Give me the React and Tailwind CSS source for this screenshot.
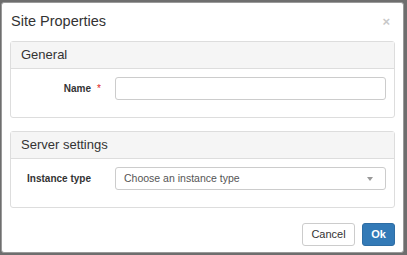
import React from 'react';

const Panel = ({ title, children }) => (
    <div className="border border-[#dddddd] rounded-[3px] bg-white">
        <div className="h-[27px] flex items-center px-[10px] bg-[#f5f5f5] border-b border-[#dddddd] text-[13px] text-[#333333]">{title}</div>
        <div className="h-[48px] pt-[8px] pl-[14px] pr-[8px]">{children}</div>
    </div>
);

const Row = ({ label, required, children }) => (
    <div className="flex items-center h-[23px]">
        <div className="w-[66px] text-right text-[10px] font-bold text-[#333333]">{label}</div>
        <div className="w-[24px] pl-[6px] text-[10px] text-[#e02020]">{required ? '*' : ''}</div>
        <div className="flex-1">{children}</div>
    </div>
);

const App = () => {
    return (
        <div className="w-[407px] h-[255px] bg-[#6e6e6e] pt-[2px] pl-[1px] overflow-hidden" style={{ fontFamily: '"Liberation Sans", Arial, sans-serif' }}>
            <div className="w-[403px] h-[251px] bg-white rounded-[3px] border border-[#9a9a9a] px-[8px] flex flex-col">
                <div className="h-[38px] flex items-center justify-between pl-[1px]">
                    <span className="text-[14.5px] text-[#333333]">Site Properties</span>
                    <span className="text-[13px] font-bold text-[#c8c8c8] mr-[5px]">×</span>
                </div>
                <Panel title="General">
                    <Row label="Name" required>
                        <div className="h-[23px] border border-[#cccccc] rounded-[3px]" />
                    </Row>
                </Panel>
                <div className="h-[13px]" />
                <Panel title="Server settings">
                    <Row label="Instance type">
                        <div className="h-[23px] border border-[#cccccc] rounded-[3px] flex items-center justify-between pl-[8px] pr-[12px]">
                            <span className="text-[10.5px] text-[#555555]">Choose an instance type</span>
                            <svg width="6" height="4" viewBox="0 0 6 4"><path d="M0 0 L6 0 L3 4 Z" fill="#999999" /></svg>
                        </div>
                    </Row>
                </Panel>
                <div className="flex justify-end gap-[7px] mt-[15px]">
                    <button className="h-[23px] w-[53px] border border-[#cccccc] rounded-[3px] bg-white text-[11px] text-[#333333]">Cancel</button>
                    <button className="h-[23px] w-[33px] rounded-[3px] bg-[#337ab7] border border-[#2e6da4] text-[11px] font-bold text-white">Ok</button>
                </div>
            </div>
        </div>
    );
};

export default App;
